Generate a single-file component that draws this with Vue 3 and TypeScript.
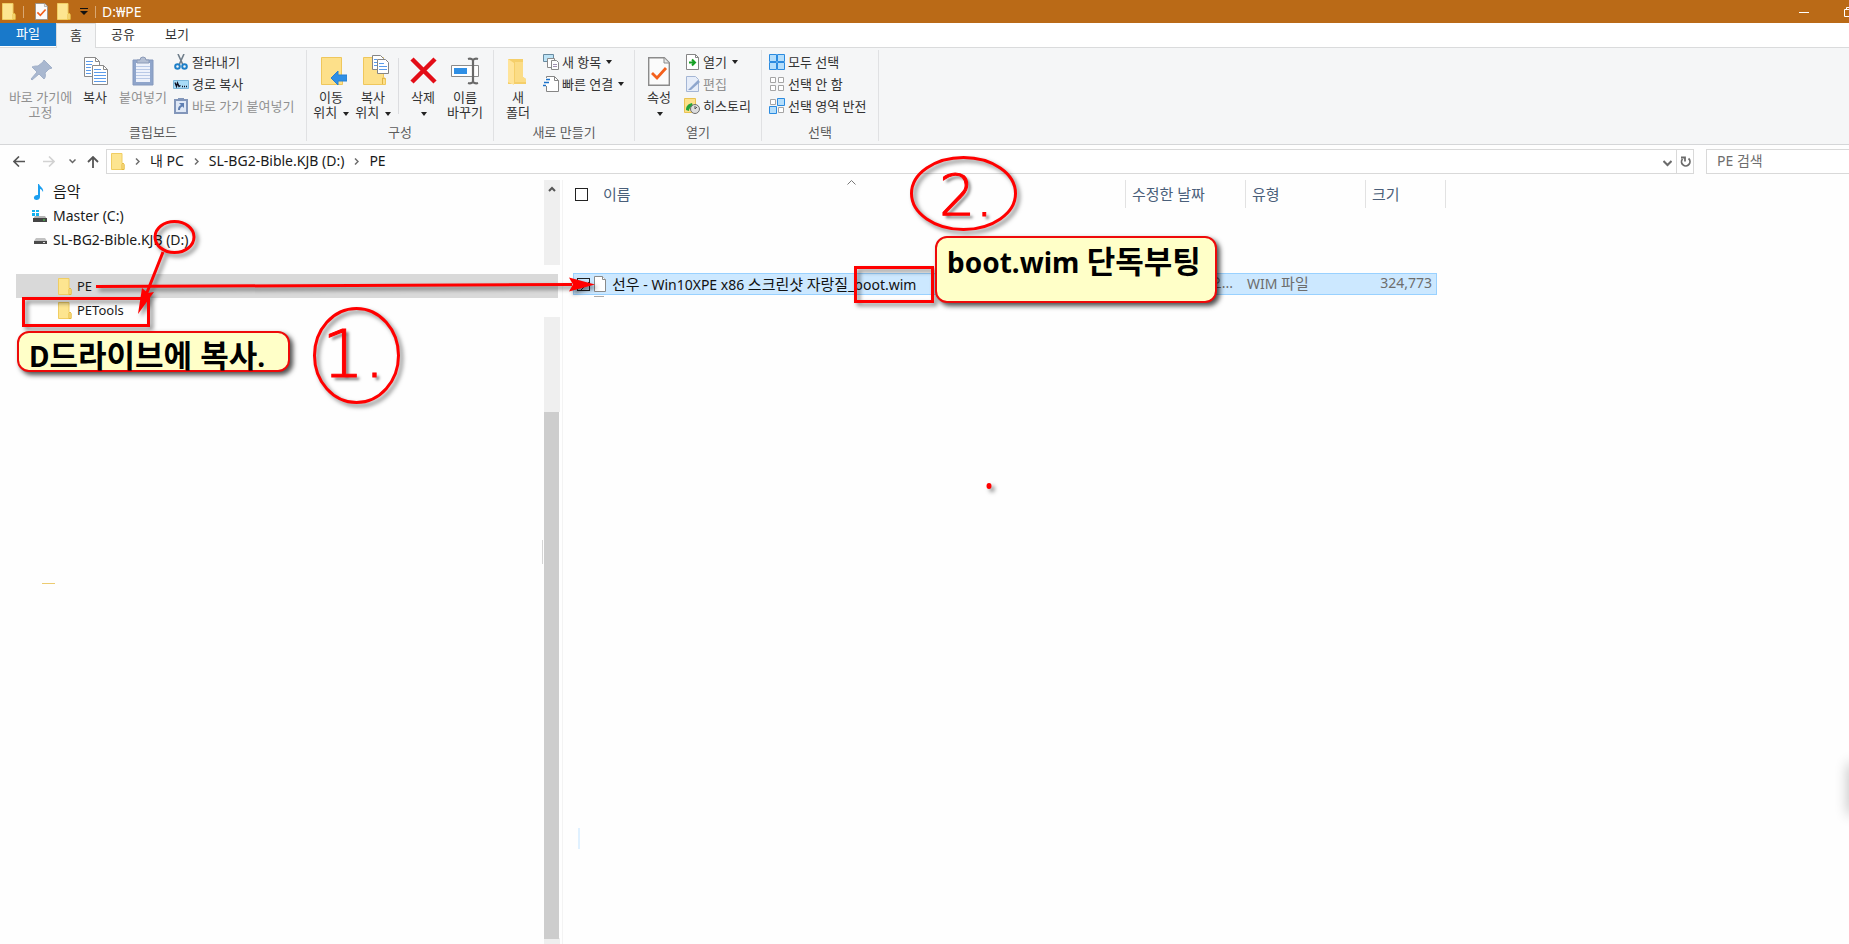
<script setup lang="ts">
import { ref } from 'vue'

interface FileRow {
  name: string
  modified: string
  type: string
  size: string
  selected: boolean
}

interface Run {
  text: string
  hangul: boolean
}

const tabs = ['홈', '공유', '보기']
const activeTab = ref('홈')
const crumbs = ['내 PC', 'SL-BG2-Bible.KJB (D:)', 'PE']
const query = ref('')
const allSelected = ref(false)
const files = ref<FileRow[]>([
  {
    name: '선우 - Win10XPE x86 스크린샷 자랑질_boot.wim',
    modified: '오...',
    type: 'WIM 파일',
    size: '324,773',
    selected: true,
  },
])

// Splits a label into Hangul and Latin runs, which are set at different sizes.
function runs(label: string): Run[] {
  return label
    .split(/([가-힣]+)/)
    .filter((text) => text !== '')
    .map((text) => ({ text, hangul: /[가-힣]/.test(text) }))
}
</script>

<template>
  <div class="window">
    <svg class="defs" aria-hidden="true">
      <symbol id="folder" viewBox="0 0 14 17">
        <path d="M0.500 0.500h10.500v10l2 1v5H0.500z" fill="#fde590" stroke="#f0cd62" />
        <path d="M11 16.500v-5l1-1.500 1 1.500v5z" fill="#ffe9a0" stroke="#e5b93c" />
      </symbol>
      <symbol id="doc-check" viewBox="0 0 22 29">
        <path d="M0.700 0.700h15.600l5 5v22.600H0.700z" fill="#fbfbfb" stroke="#8b8b8b" stroke-width="1.400" />
        <path d="M16 1v5h5" fill="#e8e8e8" stroke="#8b8b8b" />
        <path d="M4 16l5 5 9-10" fill="none" stroke="#f4601c" stroke-width="2.800" />
      </symbol>
      <symbol id="caret" viewBox="0 0 6 4"><path d="M0 0h6L3 4z" fill="#222" /></symbol>
      <symbol id="chevron" viewBox="0 0 5 7"><path d="M1 0.500l3 3-3 3" fill="none" stroke="#6e6e6e" stroke-width="1.500" /></symbol>
    </svg>

    <header class="titlebar">
      <svg class="folder-icon"><use href="#folder" /></svg>
      <i class="title-sep"></i>
      <button class="quick" aria-label="속성"><svg class="quick-doc"><use href="#doc-check" /></svg></button>
      <button class="quick" aria-label="새 폴더"><svg class="folder-icon"><use href="#folder" /></svg></button>
      <button class="quick quick-more" aria-label="빠른 실행 도구 모음 사용자 지정">
        <svg width="8" height="7" viewBox="0 0 8 7"><path d="M0 0.500h8" stroke="#111" /><path d="M0 3h8L4 7z" fill="#111" /></svg>
      </button>
      <i class="title-sep"></i>
      <h1>D:₩PE</h1>
      <div class="win-controls">
        <button aria-label="최소화"><svg width="10" height="10"><path d="M0 5.500h10" stroke="#fff" /></svg></button>
        <button aria-label="이전 크기로"><svg width="10" height="10" viewBox="0 0 10 10" fill="none" stroke="#fff"><path d="M0.500 2.500h7v7h-7zM2.500 2.500v-2h7v7h-2" /></svg></button>
      </div>
    </header>

    <nav class="tabs">
      <button class="tab file">파일</button>
      <button v-for="t in tabs" :key="t" class="tab" :class="{ active: t === activeTab }" @click="activeTab = t">{{ t }}</button>
    </nav>

    <section class="ribbon">
      <div class="group g-clip">
        <div class="tools">
          <button class="big wide off">
            <svg viewBox="0 0 32 32"><path d="M19 5l8 8-3 1-4 4c1 3 0 5-1 6l-5-5-7 6-1-1 6-7-5-5c2-1 4-1 6-1l5-4z" fill="#a9b8d0" stroke="#a1b0c9" /></svg>
            <span>바로 가기에<br />고정</span>
          </button>
          <button class="big">
            <svg viewBox="0 0 32 32">
              <g fill="#fff" stroke="#8a8a8a"><path d="M5.500 2.500h11l4 4v15h-15z" /><path d="M13.500 10.500h11l4 4v15h-15z" /></g>
              <path d="M16.500 2.500v4h4M24.500 10.500v4h4" fill="none" stroke="#8a8a8a" />
              <path d="M7 6.500h7M7 9.500h6M7 12.500h5M7 15.500h5M7 18.500h5M15 14.500h7M15 17.500h12M15 20.500h12M15 23.500h12M15 26.500h12" stroke="#5b9bea" />
            </svg>
            <span>복사</span>
          </button>
          <button class="big mid off">
            <svg viewBox="0 0 32 32">
              <path d="M6 5h20v25H6z" fill="#8fa5cb" stroke="#8498bd" />
              <path d="M9 8h14v19H9z" fill="#eef2fb" />
              <path d="M10 8V5h3a3 3 0 0 1 6 0h3v3z" fill="#b4bfd3" stroke="#8c9bb8" />
              <path d="M9 11.500h14M9 14.500h14M9 17.500h14M9 20.500h14M9 23.500h14" stroke="#b9c9e6" />
            </svg>
            <span>붙여넣기</span>
          </button>
          <div class="stack">
            <button class="small">
              <svg viewBox="0 0 16 16"><path d="M5 0l5 11M11 0L6 11" stroke="#6f7d8a" stroke-width="1.600" /><g fill="none" stroke="#1e7fc8" stroke-width="2"><circle cx="4.500" cy="12.500" r="2.300" /><circle cx="11.500" cy="12.500" r="2.300" /></g></svg>
              잘라내기
            </button>
            <button class="small">
              <svg viewBox="0 0 16 16"><path d="M0.500 4.500h15v8h-15z" fill="#a9dcf8" stroke="#7bb6da" /><path d="M2 6.500l1.500 4 1-3.500 1.500 3.500 1.500-1M9 10.500h1M11 10.500h1M13 10.500h1" fill="none" stroke="#112" stroke-width="1.300" /></svg>
              경로 복사
            </button>
            <button class="small off">
              <svg viewBox="0 0 16 16"><path d="M2 2h12v13H2z" fill="#dfe8f6" stroke="#8296ba" stroke-width="2" /><path d="M5 0h6v3H5z" fill="#8296ba" /><path d="M5 12c0-3 1-4 3-5L6 5h5v5L9.500 8.500C8 9 7 10 7 12z" fill="#5f7fb2" /></svg>
              바로 가기 붙여넣기
            </button>
          </div>
        </div>
        <h2>클립보드</h2>
      </div>

      <div class="group g-org">
        <div class="tools">
          <button class="big">
            <svg viewBox="0 0 32 32"><path d="M6.500 2.500h20v20l1 1v6h-21z" fill="#fde08a" stroke="#efc75c" /><path d="M16 23l7-7v4h9v6h-9v4z" fill="#2f8fe5" stroke="#2680d2" /></svg>
            <span>이동<br />위치 <svg class="caret"><use href="#caret" /></svg></span>
          </button>
          <button class="big">
            <svg viewBox="0 0 32 32">
              <path d="M6.500 2.500h20v20l2 1v6h-22z" fill="#fde08a" stroke="#efc75c" /><path d="M25.500 29v-6l3 1" fill="none" stroke="#e0b344" />
              <g fill="#fff" stroke="#858585"><path d="M15.500 0.500h8l3 3v11h-11z" /><path d="M20.500 4.500h8l3 3v11h-11z" /></g>
              <path d="M17 4.500h3M17 7.500h3M17 10.500h3M22 8.500h5M22 11.500h8M22 14.500h8" stroke="#5b9bea" />
            </svg>
            <span>복사<br />위치 <svg class="caret"><use href="#caret" /></svg></span>
          </button>
          <i class="inner-sep"></i>
          <button class="big">
            <svg viewBox="0 0 32 32"><path d="M5 4l23 23M28 4L5 27" stroke="#e30d17" stroke-width="4.500" /></svg>
            <span>삭제<br /><svg class="caret"><use href="#caret" /></svg></span>
          </button>
          <button class="big">
            <svg viewBox="0 0 32 32"><path d="M2.500 10.500h27v11h-27z" fill="#fff" stroke="#8b8b8b" /><path d="M5 13h13v6H5z" fill="#2f8fe5" /><path d="M24 4v24M19 4c3-1 4 0 5 1 1-1 2-2 5-1M19 28c3 1 4 0 5-1 1 1 2 2 5 1" fill="none" stroke="#696969" stroke-width="2.200" /></svg>
            <span>이름<br />바꾸기</span>
          </button>
        </div>
        <h2>구성</h2>
      </div>

      <div class="group g-new">
        <div class="tools">
          <button class="big">
            <svg viewBox="0 0 32 32"><path d="M6 4h15v18l3 2v5H6z" fill="#f5cf6a" /><path d="M6 4l6 4v22l-6-3z" fill="#ffe49a" /><path d="M13 7h8v15l3 2v3H13z" fill="#fbdc86" /></svg>
            <span>새<br />폴더</span>
          </button>
          <div class="stack">
            <button class="small">
              <svg viewBox="0 0 16 16"><path d="M0.500 0.500h10v7h-10z" fill="#bde3f6" stroke="#688aa0" /><g fill="#fff" stroke="#8a8a8a"><path d="M4.500 4.500h7v9h-7z" /><path d="M8.500 6.500h5l2 2v7h-7z" /></g><path d="M10 10.500h4M10 12.500h4" stroke="#a090b0" /></svg>
              새 항목 <svg class="caret"><use href="#caret" /></svg>
            </button>
            <button class="small">
              <svg viewBox="0 0 16 16"><path d="M3.500 0.500h8l4 4v11h-12z" fill="#fff" stroke="#858585" /><path d="M11.500 0.500v4h4" fill="none" stroke="#858585" /><path d="M2 2h5v8H2z" fill="#fff" /><path d="M3 3.500h4M1 6.500h5M0 9.500h3" stroke="#1c72c8" stroke-width="1.500" /></svg>
              빠른 연결 <svg class="caret"><use href="#caret" /></svg>
            </button>
          </div>
        </div>
        <h2>새로 만들기</h2>
      </div>

      <div class="group g-open">
        <div class="tools">
          <button class="big">
            <svg viewBox="-5 -2 32 32"><use href="#doc-check" width="22" height="29" /></svg>
            <span>속성<br /><svg class="caret"><use href="#caret" /></svg></span>
          </button>
          <div class="stack">
            <button class="small">
              <svg viewBox="0 0 16 16"><path d="M2.500 0.500h9l3 3v12h-12z" fill="#fff" stroke="#858585" /><path d="M11.500 0.500v3h3" fill="none" stroke="#858585" /><path d="M5 8.500h6M8 5.500l3 3-3 3" fill="none" stroke="#15a023" stroke-width="2" /></svg>
              열기 <svg class="caret"><use href="#caret" /></svg>
            </button>
            <button class="small off">
              <svg viewBox="0 0 16 16"><path d="M2.500 0.500h9l3 3v12h-12z" fill="#e6edf9" stroke="#a4b6d5" /><path d="M4 14l10-10 2 2L7 14z" fill="#8ea6cd" /></svg>
              편집
            </button>
            <button class="small">
              <svg viewBox="0 0 16 16"><path d="M0.500 0.500h11v14h-11z" fill="#fde08a" stroke="#e9c352" /><path d="M2 12c0-4 2-6 6-7l1 3c-3 1-4 3-4 5z" fill="#24a33a" /><circle cx="11" cy="11" r="4.500" fill="#ddd" stroke="#6f6f6f" /><path d="M11 8v3l2-2" fill="none" stroke="#555" /></svg>
              히스토리
            </button>
          </div>
        </div>
        <h2>열기</h2>
      </div>

      <div class="group g-select">
        <div class="tools">
          <div class="stack">
            <button class="small">
              <svg viewBox="0 0 16 16"><path d="M0.500 0.500h7v7h-7zM8.500 0.500h7v7h-7zM0.500 8.500h7v7h-7zM8.500 8.500h7v7h-7z" fill="#b5defb" stroke="#2b8be0" /></svg>
              모두 선택
            </button>
            <button class="small">
              <svg viewBox="0 0 16 16"><path d="M1.500 1.500h5v5h-5zM9.500 1.500h5v5h-5zM1.500 9.500h5v5h-5zM9.500 9.500h5v5h-5z" fill="#fff" stroke="#a5a5a5" /></svg>
              선택 안 함
            </button>
            <button class="small">
              <svg viewBox="0 0 16 16"><path d="M1.500 1.500h5v5h-5zM9.500 9.500h5v5h-5z" fill="#fff" stroke="#a5a5a5" /><path d="M8.500 0.500h7v7h-7zM0.500 8.500h7v7h-7z" fill="#b5defb" stroke="#2b8be0" /></svg>
              선택 영역 반전
            </button>
          </div>
        </div>
        <h2>선택</h2>
      </div>
    </section>

    <div class="navbar">
      <button aria-label="뒤로"><svg width="12" height="11" fill="none" stroke="#555" stroke-width="1.600"><path d="M12 5.500H1M6 0.500l-5 5 5 5" /></svg></button>
      <button aria-label="앞으로"><svg width="12" height="11" fill="none" stroke="#d2d2d2" stroke-width="1.600"><path d="M0 5.500h11M6 0.500l5 5-5 5" /></svg></button>
      <button class="recent" aria-label="최근 위치"><svg width="7" height="5" fill="none" stroke="#666" stroke-width="1.500"><path d="M0.500 0.500l3 3 3-3" /></svg></button>
      <button class="up" aria-label="위로"><svg width="12" height="12" fill="none" stroke="#555" stroke-width="1.800"><path d="M6 12V1M1 6l5-5 5 5" /></svg></button>
      <div class="address">
        <svg class="folder-icon"><use href="#folder" /></svg>
        <template v-for="c in crumbs" :key="c">
          <svg class="chevron"><use href="#chevron" /></svg>
          <button class="crumb">{{ c }}</button>
        </template>
        <button class="drop" aria-label="이전 위치"><svg width="9" height="7" fill="none" stroke="#6b6b6b" stroke-width="2"><path d="M0.500 1l4 4 4-4" /></svg></button>
        <button class="refresh" aria-label="새로 고침"><svg width="11" height="12" fill="none" stroke="#6b6b6b" stroke-width="1.800"><path d="M8.500 2.500a4.200 4.200 0 1 1-6 0.500M1 1.500h4v4" /></svg></button>
      </div>
      <input v-model="query" class="search" type="text" placeholder="PE 검색" aria-label="PE 검색" />
    </div>

    <main class="body">
      <aside class="tree">
        <ul>
          <li>
            <button>
              <svg viewBox="0 0 16 16"><path d="M7 0c1 3 5 4 4 8-1-2-2-3-3-3v8c0 4-7 4-6 0 1-2 3-2 4-2V0z" fill="#1c9ff0" /></svg><span class="ko">음악</span>
            </button>
          </li>
          <li>
            <button>
              <svg viewBox="0 0 16 16"><path d="M0 2h3v2H0zM4 2h3v2H4zM0 5h3v3H0zM4 5h3v3H4z" fill="#13b2f0" /><path d="M3 8h10l2 3H1z" fill="#b5b5b5" /><path d="M1 10h14v4H1z" fill="#454545" /><path d="M11 12h2" stroke="#46e04d" /></svg>Master (C:)
            </button>
          </li>
          <li>
            <button>
              <svg viewBox="0 0 16 16"><path d="M4 6h9l2 3H2z" fill="#c2c2c2" /><path d="M2 9h13v3H2z" fill="#4b4b4b" /><path d="M11 10.500h2" stroke="#ddd" /></svg>SL-BG2-Bible.KJB (D:)
            </button>
          </li>
          <li class="child current"><button><svg class="folder-icon"><use href="#folder" /></svg>PE</button></li>
          <li class="child"><button><svg class="folder-icon"><use href="#folder" /></svg>PETools</button></li>
        </ul>
        <div class="scrollbar">
          <div class="track first"><svg width="8" height="6" fill="none" stroke="#555" stroke-width="2"><path d="M1 5l3-3 3 3" /></svg></div>
          <div class="track second"></div>
          <div class="thumb"></div>
        </div>
      </aside>

      <section class="files">
        <table>
          <thead>
            <tr>
              <th class="name"><input v-model="allSelected" type="checkbox" aria-label="모두 선택" />이름
                <svg class="sort" width="9" height="5" fill="none" stroke="#777"><path d="M0.500 4.500l4-4 4 4" /></svg></th>
              <th>수정한 날짜</th>
              <th>유형</th>
              <th>크기</th>
            </tr>
          </thead>
          <tbody>
            <tr v-for="f in files" :key="f.name" :class="{ selected: f.selected }">
              <td class="name">
                <input v-model="f.selected" type="checkbox" :aria-label="f.name" />
                <svg width="12" height="16" viewBox="0 0 12 16" fill="#fff" stroke="#8a8a8a"><path d="M0.500 0.500h8l3 3v12h-11z" /><path d="M8.500 0.500v3h3" /></svg>
                <span><span v-for="(r, i) in runs(f.name)" :key="i" :class="{ 'row-ko': r.hangul }">{{ r.text }}</span></span>
              </td>
              <td class="date">{{ f.modified }}</td>
              <td class="type"><span v-for="(r, i) in runs(f.type)" :key="i" :class="{ 'row-ko': r.hangul }">{{ r.text }}</span></td>
              <td class="size">{{ f.size }}</td>
            </tr>
          </tbody>
        </table>
      </section>
    </main>

    <!-- hand-drawn notes over the window -->
    <svg class="marks" width="1100" height="900" fill="none" stroke="#f00" stroke-width="3" aria-hidden="true">
      <g class="inked">
        <ellipse cx="174.500" cy="237" rx="19.500" ry="15.500" />
        <path d="M163 252L146 295" />
        <path d="M138 314l4-26 6 5 6-1z" fill="#f00" stroke="none" />
        <path d="M23.500 298.500h125v27h-125z" />
        <path d="M96 286.500L572 284.500" />
        <path d="M595 284.500l-26-7 4 7-4 7z" fill="#f00" stroke="none" />
        <ellipse cx="356.500" cy="355.500" rx="42" ry="47" />
        <path d="M855.500 267.500h77v34h-77z" />
        <ellipse cx="963.500" cy="193.500" rx="52" ry="36" />
        <ellipse cx="989" cy="486" rx="2.500" ry="3" fill="#f00" stroke="none" />
      </g>
      <path d="M42 583.500h13" stroke="#eccb70" stroke-width="1" />
      <path d="M542.500 540v24" stroke="#d5d5d5" stroke-width="1" />
      <path d="M579 828v21" stroke="#e0f1ff" stroke-width="2" />
      <path d="M594 296.500h10" stroke="#aaa" stroke-width="1" />
    </svg>
    <span class="ink one">1.</span>
    <span class="ink two">2.</span>
    <p class="note copy-note">D<span class="hangul">드라이브에 복사</span>.</p>
    <p class="note boot-note">boot.wim <span class="hangul">단독부팅</span></p>
    <i class="edge-shade"></i>
  </div>
</template>

<style>
body {
  margin: 0;
}
</style>

<style scoped>
.window {
  position: relative;
  display: flex;
  flex-direction: column;
  min-height: 100vh;
  overflow: hidden;
  background: #fefefe;
  color: #1a1a1a;
  font-family: 'Noto Sans', 'Noto Sans CJK KR', sans-serif;
  font-size: 13px;
}
.window * {
  box-sizing: border-box;
}
.defs {
  position: absolute;
  width: 0;
  height: 0;
}
button {
  padding: 0;
  border: 0;
  background: none;
  color: inherit;
  font: inherit;
}
svg {
  flex: none;
}
h1,
h2,
p,
ul {
  margin: 0;
  padding: 0;
  font-weight: 400;
}
.folder-icon {
  width: 14px;
  height: 17px;
}
.titlebar {
  display: flex;
  align-items: center;
  height: 23px;
  padding-left: 2px;
  background: #ba6a17;
  color: #fff;
}
.title-sep {
  width: 1px;
  height: 12px;
  margin: 0 11px 0 7px;
  background: #d9a873;
}
.quick {
  display: flex;
  margin-right: 9px;
}
.quick-doc {
  width: 13px;
  height: 17px;
}
.quick-more {
  margin: 0;
}
.titlebar .quick-more + .title-sep {
  margin-right: 6px;
}
h1 {
  font-size: 14px;
  line-height: 18px;
}
.win-controls {
  display: flex;
  gap: 35px;
  margin-left: auto;
  margin-right: -5px;
}
.win-controls button {
  display: flex;
}
.tabs {
  display: flex;
  height: 25px;
  border-bottom: 1px solid #dadbdc;
  background: #fff;
}
.tab {
  width: 54px;
  height: 24px;
  padding-bottom: 3px;
  color: #333;
  line-height: 20px;
}
.tab.file {
  width: 56px;
  height: 23px;
  background: #1979ca;
  color: #fff;
}
.tab.active {
  width: 40px;
  height: 25px;
  border: 1px solid #dadbdc;
  border-bottom: 0;
  background: #f5f6f7;
}
.ribbon {
  display: flex;
  height: 97px;
  padding: 2px 0 3px;
  border-bottom: 1px solid #d5d6d8;
  background: #f5f6f7;
  color: #333;
}
.group {
  display: flex;
  flex-direction: column;
  flex: none;
  border-right: 1px solid #e0e1e3;
}
.g-clip { width: 307px; }
.g-org { width: 187px; }
.g-new { width: 141px; }
.g-open { width: 127px; }
.g-select { width: 117px; }
.group h2 {
  color: #5c5c5c;
  font-size: 13px;
  line-height: 18px;
  text-align: center;
}
.tools {
  display: flex;
  flex: 1;
  padding-left: 3px;
}
.g-clip .tools,
.g-select .tools { padding-left: 7px; }
.big {
  display: flex;
  flex-direction: column;
  align-items: center;
  width: 42px;
  padding-top: 5px;
  line-height: 15px;
  white-space: nowrap;
}
.big > svg {
  width: 32px;
  height: 32px;
  margin-bottom: 3px;
}
.wide { width: 67px; }
.mid { width: 54px; }
.off { color: #909090; }
.stack {
  display: flex;
  flex-direction: column;
  align-items: flex-start;
  padding-top: 1px;
}
.g-clip .stack { padding-left: 3px; }
.g-new .stack,
.g-open .stack { padding-left: 4px; }
.small {
  display: flex;
  align-items: center;
  gap: 3px;
  height: 22px;
  line-height: 18px;
  white-space: nowrap;
}
.small > svg {
  width: 16px;
  height: 16px;
}
.caret,
.small > .caret {
  width: 6px;
  height: 4px;
  margin-left: 2px;
  vertical-align: middle;
}
.inner-sep {
  width: 1px;
  height: 56px;
  margin: 8px 3px 0 4px;
  background: #dcdde0;
}
.navbar {
  display: flex;
  height: 35px;
  padding: 4px 0 6px 13px;
}
.navbar > button {
  display: flex;
  align-items: center;
  margin-right: 18px;
}
.navbar > .recent {
  margin-left: -4px;
  margin-right: 11px;
}
.navbar > .up {
  margin-right: 7px;
}
.address {
  display: flex;
  flex: 1;
  align-items: center;
  padding-left: 4px;
  border: 1px solid #d9d9d9;
  background: #fff;
}
.chevron {
  width: 5px;
  height: 7px;
  margin: 0 10px;
}
.crumb {
  padding-bottom: 2px;
  font-size: 14px;
  line-height: 20px;
}
.drop {
  width: 17px;
  margin-left: auto;
}
.refresh {
  display: flex;
  align-items: center;
  justify-content: center;
  align-self: stretch;
  width: 17px;
  border-left: 1px solid #d9d9d9;
}
.search {
  width: 143px;
  margin-left: 12px;
  padding: 0 10px 2px;
  border: 1px solid #d9d9d9;
  border-right: 0;
  background: #fff;
  font: inherit;
  font-size: 14px;
}
.search::placeholder {
  color: #6d6d6d;
  opacity: 1;
}
.body {
  display: flex;
  flex: 1;
}
.tree {
  display: flex;
  width: 563px;
  padding-left: 16px;
  border-right: 1px solid #f3f3f3;
}
.tree ul {
  flex: 1;
  list-style: none;
  margin-right: -14px;
}
.tree li button {
  display: flex;
  align-items: center;
  gap: 5px;
  width: 100%;
  height: 24px;
  padding-left: 16px;
  font-size: 14px;
  line-height: 20px;
}
.tree li svg:not(.folder-icon) {
  width: 16px;
  height: 16px;
}
.tree .child button {
  padding-left: 42px;
  font-size: 13px;
}
.tree .current {
  margin-top: 22px;
  background: #d9d9d9;
}
.ko {
  padding-bottom: 2px;
  font-size: 15px;
  line-height: 20px;
}
.scrollbar {
  display: flex;
  flex-direction: column;
  width: 16px;
  margin-right: 2px;
  padding-bottom: 5px;
  background: linear-gradient(#efefef, #efefef) bottom / 16px 6px no-repeat;
}
.track {
  background: #efefef;
  text-align: center;
}
.first {
  height: 85px;
  line-height: 14px;
}
.second {
  height: 95px;
  margin-top: 52px;
}
.thumb {
  flex: 1;
  width: 15px;
  background: #cdcdcd;
}
.files {
  flex: 1;
  padding-left: 10px;
}
table,
thead,
tbody {
  display: block;
}
tr {
  display: grid;
  grid-template-columns: 553px 120px 120px 80px;
  width: 873px;
}
thead tr {
  height: 26px;
  margin-bottom: 67px;
}
th {
  padding: 0 0 0 6px;
  border-right: 1px solid #e2e2e2;
  color: #4a5f7a;
  font-size: 15px;
  font-weight: 400;
  line-height: 28px;
  text-align: left;
}
th.name {
  display: flex;
  align-items: center;
  gap: 15px;
  padding-left: 2px;
}
.sort {
  margin: -24px 0 0 201px;
}
tbody tr {
  grid-template-columns: 553px 120px 119px 1fr;
  width: 864px;
  height: 22px;
  border: 1px solid #99d1ff;
  background: #cce8ff;
}
td {
  padding: 0;
  color: #6d6d6d;
  font-size: 14px;
  line-height: 18px;
  white-space: nowrap;
}
.row-ko {
  font-size: 15px;
}
td.name {
  display: flex;
  align-items: center;
  gap: 4px;
  padding-left: 3px;
  color: #111;
}
td.name svg {
  margin-right: 2px;
}
td.date {
  padding-right: 14px;
  text-align: right;
}
td.size {
  padding-right: 4px;
  text-align: right;
}
input[type='checkbox'] {
  appearance: none;
  flex: none;
  width: 13px;
  height: 13px;
  margin: 0;
  border: 1px solid #222;
  background: #fff;
}
td input[type='checkbox']:checked {
  background: linear-gradient(135deg, transparent 60%, #333 60% 68%, transparent 68%);
}
.marks {
  position: absolute;
  top: 0;
  left: 0;
  pointer-events: none;
}
.inked {
  filter: drop-shadow(3px 3px 2px rgba(0, 0, 0, 0.5));
}
.ink {
  position: absolute;
  color: #f00;
  font-family: 'DejaVu Sans', sans-serif;
  font-weight: 200;
  line-height: 1;
  text-shadow: 3px 3px 3px rgba(0, 0, 0, 0.5);
  -webkit-text-stroke: 1px #f00;
}
.one {
  top: 322px;
  left: 322px;
  font-size: 66px;
}
.two {
  top: 168px;
  left: 939px;
  font-size: 57px;
}
.note {
  position: absolute;
  border: 2px solid #ee0a0a;
  border-radius: 12px;
  background: #ffffc8;
  box-shadow: 3px 3px 5px rgba(0, 0, 0, 0.7);
  color: #000;
  font-size: 28px;
  font-weight: 700;
  white-space: nowrap;
}
.hangul {
  font-size: 31px;
  font-weight: 600;
}
.copy-note {
  top: 331px;
  left: 17px;
  width: 273px;
  height: 41px;
  padding-left: 10px;
  line-height: 44px;
}
.boot-note {
  top: 236px;
  left: 935px;
  width: 282px;
  height: 67px;
  padding-left: 10px;
  line-height: 46px;
}
.edge-shade {
  position: absolute;
  top: 764px;
  right: -10px;
  width: 10px;
  height: 50px;
  box-shadow: 0 0 14px rgba(0, 0, 0, 0.3);
}
</style>
